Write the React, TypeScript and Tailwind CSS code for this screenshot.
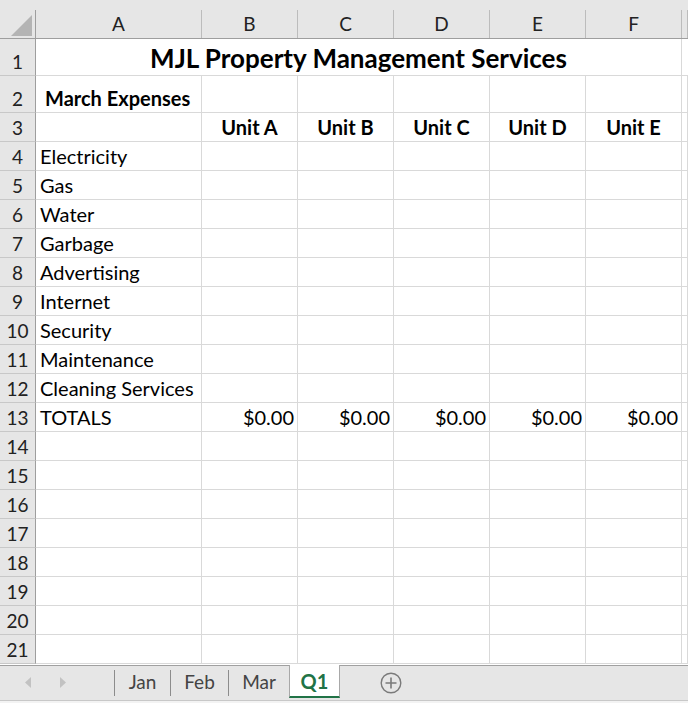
import React from 'react';

const FONT = { fontFamily: 'Lato, "Open Sans", "Liberation Sans", sans-serif' };

const letters = ['A', 'B', 'C', 'D', 'E', 'F', ''];
const colW = ['w-[166px]', 'w-[96px]', 'w-[96px]', 'w-[96px]', 'w-[96px]', 'w-[96px]', 'flex-1'];

const items = [
  'Electricity',
  'Gas',
  'Water',
  'Garbage',
  'Advertising',
  'Internet',
  'Security',
  'Maintenance',
  'Cleaning Services',
];

const RowHead: React.FC<{ n: number; h: string }> = ({ n, h }) => (
  <div
    className={`w-[36px] shrink-0 ${h} bg-[#e6e6e6] border-r border-b border-r-[#9e9e9e] border-b-[#c8c8c8] flex items-end justify-center pb-[2px] text-[19px] leading-[23px] text-[#222]`}
  >
    {n}
  </div>
);

const Cell: React.FC<{ i: number; children?: React.ReactNode; className?: string }> = ({ i, children, className = '' }) => (
  <div
    className={`${colW[i]} shrink-0 border-r border-b border-[#d9d9d9] flex items-end pb-[2px] text-[20px] leading-[24px] text-black whitespace-nowrap overflow-visible ${className}`}
  >
    {children}
  </div>
);

const Row: React.FC<{ n: number; h: string; cells: React.ReactNode[]; classes?: string[] }> = ({ n, h, cells, classes = [] }) => (
  <div className={`flex ${h}`}>
    <RowHead n={n} h={h} />
    {letters.map((_, i) => (
      <Cell key={i} i={i} className={classes[i]}>
        {cells[i]}
      </Cell>
    ))}
  </div>
);

export default function App() {
  const units = ['Unit A', 'Unit B', 'Unit C', 'Unit D', 'Unit E'];
  const unitCls = 'justify-center font-bold';
  const moneyCls = 'justify-end pr-[3px]';
  return (
    <div className="w-[688px] h-[703px] bg-white overflow-hidden flex flex-col" style={FONT}>
      {/* column headers */}
      <div className="flex h-[39px] bg-[#e6e6e6] border-b border-[#9e9e9e] shrink-0">
        <div className="w-[36px] shrink-0 flex flex-col">
          <div className="h-[10px]" />
          <div className="flex-1 border-r border-[#9e9e9e] flex items-end justify-end pr-[3px] pb-[2px]">
            <div className="w-[21px] h-[21px] bg-[#b4b4b4] [clip-path:polygon(100%_0,100%_100%,0_100%)]" />
          </div>
        </div>
        {letters.map((l, i) => (
          <div key={i} className={`${colW[i]} shrink-0 flex flex-col`}>
            <div className="h-[10px]" />
            <div className="flex-1 border-r border-[#bcbcbc] flex items-end justify-center pb-[3px] text-[19px] leading-[23px] text-[#222]">
              {l}
            </div>
          </div>
        ))}
      </div>

      {/* row 1: merged title */}
      <div className="flex h-[37px] shrink-0">
        <RowHead n={1} h="h-[37px]" />
        <div className="w-[646px] shrink-0 border-r border-b border-[#d9d9d9] flex items-end justify-center pb-[2px] text-[26px] leading-[30px] font-bold text-black">
          MJL Property Management Services
        </div>
        <div className="flex-1 border-b border-[#d9d9d9]" />
      </div>

      <Row n={2} h="h-[37px]" cells={['March Expenses']} classes={['pl-[9px] font-bold']} />
      <Row n={3} h="h-[29px]" cells={['', ...units]} classes={['', unitCls, unitCls, unitCls, unitCls, unitCls]} />
      {items.map((it, k) => (
        <Row key={it} n={k + 4} h="h-[29px]" cells={[it]} classes={['pl-[4px]']} />
      ))}
      <Row
        n={13}
        h="h-[29px]"
        cells={['TOTALS', '$0.00', '$0.00', '$0.00', '$0.00', '$0.00']}
        classes={['pl-[4px]', moneyCls, moneyCls, moneyCls, moneyCls, moneyCls]}
      />
      {Array.from({ length: 8 }, (_, k) => (
        <Row key={k} n={k + 14} h="h-[29px]" cells={[]} />
      ))}

      {/* sheet tabs */}
      <div className="flex h-[36px] shrink-0 bg-[#e6e6e6] border-t border-[#a0a0a0] border-b border-b-[#c8c8c8] mt-[1px]">
        <div className="w-[114px] shrink-0 flex items-center">
          <svg width="114" height="34" viewBox="0 0 114 34">
            <polygon points="31,11 31,22 25,16.5" fill="#c2c2c2" />
            <polygon points="60,11 60,22 66,16.5" fill="#c2c2c2" />
          </svg>
        </div>
        {[
          ['Jan', 'w-[56px]'],
          ['Feb', 'w-[58px]'],
          ['Mar', 'w-[61px]'],
        ].map(([t, w]) => (
          <div key={t} className={`${w} shrink-0 flex items-center`}>
            <div className="w-px h-[26px] bg-[#8c8c8c]" />
            <div className="flex-1 text-center text-[19px] text-[#444] pb-[2px]">{t}</div>
          </div>
        ))}
        <div className="w-[51px] shrink-0 bg-white border-x border-[#a8a8a8] border-b-[2px] border-b-[#217346] -mt-px mb-[2px] flex items-center justify-center text-[20px] font-bold text-[#217346]">
          Q1
        </div>
        <div className="w-[40px]" />
        <div className="flex items-center">
          <svg width="22" height="22" viewBox="0 0 22 22">
            <circle cx="11" cy="11" r="9.8" fill="none" stroke="#7a7a7a" strokeWidth="1.4" />
            <path d="M11 5.5v11M5.5 11h11" stroke="#7a7a7a" strokeWidth="1.6" />
          </svg>
        </div>
      </div>
      <div className="flex-1 bg-[#f3f3f3]" />
    </div>
  );
}
